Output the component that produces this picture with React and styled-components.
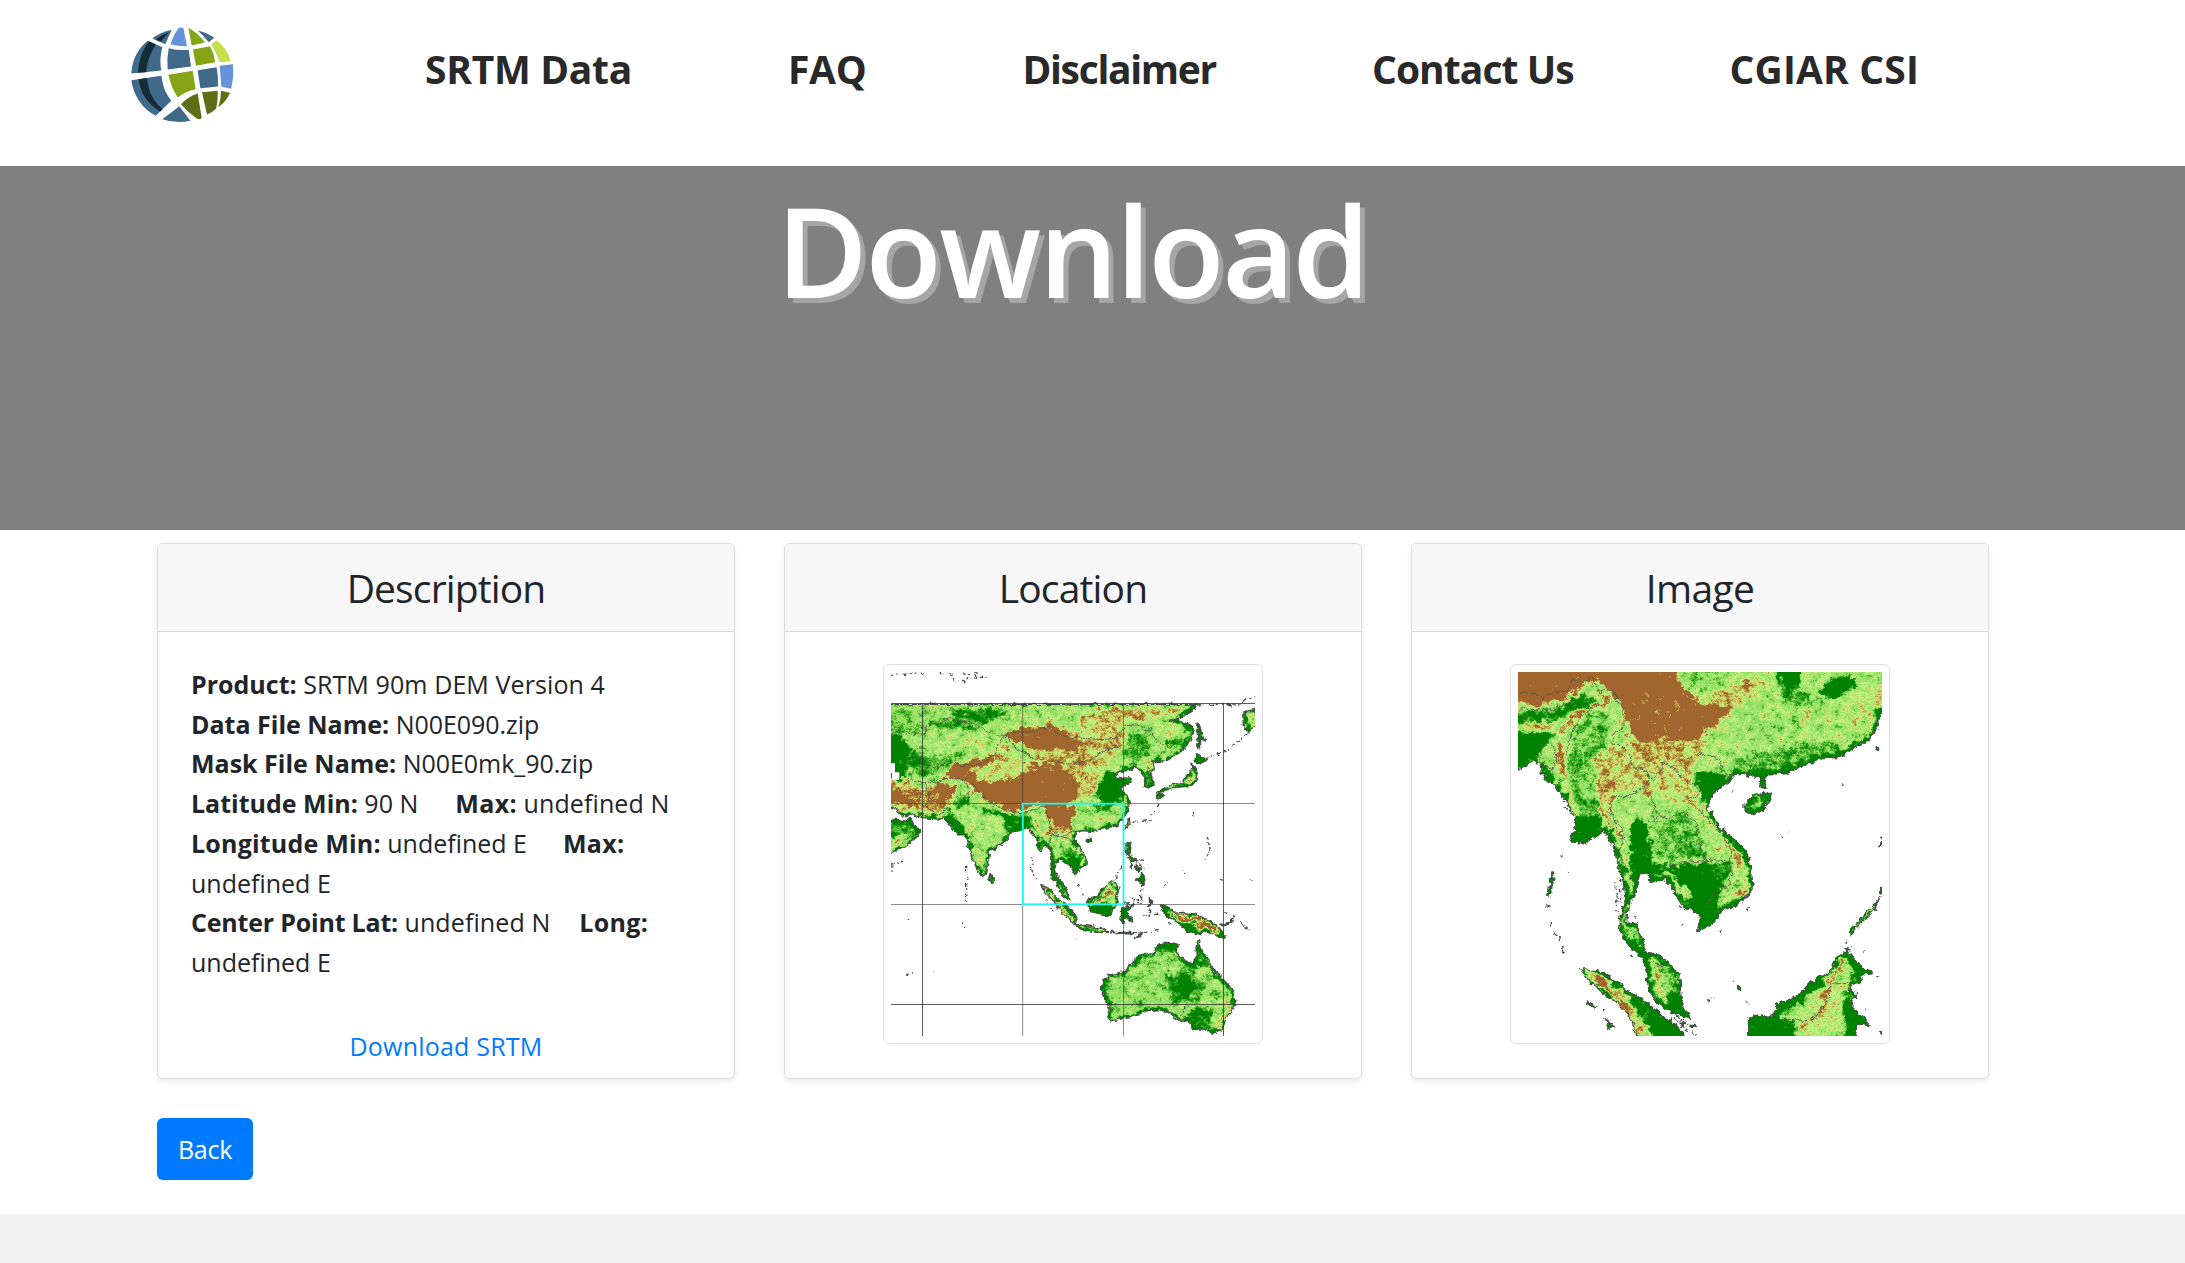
import React from 'react';
import styled, { createGlobalStyle } from 'styled-components';

const GlobalStyle = createGlobalStyle`
  *, *::before, *::after { box-sizing: border-box; }
  body {
    margin: 0;
    background: #fff;
    color: #212529;
    font-family: "Open Sans", "Noto Sans", sans-serif;
    font-size: 25px;
    line-height: 39.7px;
  }
`;

const Page = styled.div`
  display: flex;
  flex-direction: column;
  min-height: 1263px;
  overflow: hidden;
`;

const Header = styled.header`
  display: flex;
  align-items: flex-start;
  height: 166px;
  padding-left: 130px;
  background: #fff;
`;

const Brand = styled.a`
  display: block;
  width: 105px;
  margin: 26px 190px 0 0;
`;

const Nav = styled.nav`
  display: flex;
  gap: 156px;
  padding-top: 39px;
`;

const NavLink = styled.a`
  color: #292929;
  font-size: 39px;
  font-weight: 700;
  line-height: 60px;
  letter-spacing: ${(p) => p.$tracking}px;
  white-space: nowrap;
  text-decoration: none;
`;

const Banner = styled.section`
  height: 364px;
  padding: 8px 41px 0 0;
  background: #808080;
  text-align: center;
`;

const Title = styled.h1`
  margin: 0;
  color: #fff;
  font-size: 125px;
  font-weight: 600;
  line-height: 151px;
  letter-spacing: -2.4px;
  text-shadow: 5px 5px rgba(255, 255, 255, 0.3);
`;

const Main = styled.main`
  width: 1832px;
  margin-left: 157px;
  padding: 13px 0 34px;
`;

const Deck = styled.div`
  display: grid;
  grid-template-columns: repeat(3, 1fr);
  gap: 49px;
`;

const CardBox = styled.article`
  display: flex;
  flex-direction: column;
  height: 536px;
  border: 1px solid #dcdddd;
  border-radius: 6px;
  background: #fff;
  box-shadow: 0 3px 7px rgba(0, 0, 0, 0.08);
  overflow: hidden;
`;

const CardHeader = styled.header`
  height: 88px;
  padding-top: 20px;
  border-bottom: 1px solid #d8d9d9;
  background: #f7f7f7;
  text-align: center;
`;

const CardTitle = styled.h4`
  margin: 0;
  font-size: 39px;
  font-weight: 400;
  line-height: 48px;
  letter-spacing: ${(p) => p.$tracking}px;
`;

const CardBody = styled.div`
  display: flex;
  flex-direction: column;
  align-items: ${(p) => (p.$centered ? 'center' : 'stretch')};
  padding: ${(p) => (p.$centered ? 32 : 33)}px 32px 0;
`;

const Details = styled.p`
  margin: 0 -1px 44px 1px;
`;

const Label = styled.strong`
  margin-left: ${(p) => p.$indent || 0}px;
  font-weight: 700;
  letter-spacing: ${(p) => p.$tracking || 0}px;
`;

const Value = styled.span`
  letter-spacing: ${(p) => p.$tracking || 0}px;
`;

const DownloadLink = styled.a`
  align-self: center;
  color: #007bff;
  letter-spacing: 0.2px;
  text-decoration: none;
`;

const Thumbnail = styled.div`
  width: 380px;
  height: 380px;
  padding: 7px;
  border: 1px solid #dee2e6;
  border-radius: 6px;
  background: #fff;
`;

const MapSvg = styled.svg`
  display: block;
  width: 364px;
  height: 364px;
`;

const BackButton = styled.button`
  display: block;
  width: 96px;
  height: 62px;
  margin-top: 39px;
  padding: 0;
  border: 0;
  border-radius: 6px;
  background: #007bff;
  color: #fff;
  font: inherit;
  line-height: 62px;
  letter-spacing: -0.3px;
`;

const Footer = styled.footer`
  flex: 1;
  background: #f1f1f1;
`;

const GLOBE = [
  ['#406a8a', 'M64,191C66,150 85,115 113,93L157,112C150,140 150,160 154,182Z'],
  ['#152b36', 'M118,95L138,104C120,130 110,160 109,187L84,189C87,150 98,115 118,95Z'],
  ['#406a8a', 'M64,211L154,198C158,225 165,250 184,273L137,318C95,295 70,255 64,211Z'],
  ['#152b36', 'M86,208L111,205C115,245 130,275 158,298L151,305C110,280 90,245 86,208Z'],
  ['#406a8a', 'M127,86Q150,68 185,60L166,103Z'],
  ['#152b36', 'M138,90Q152,75 178,67Q163,80 152,96Z'],
  ['#6692da', 'M206,54L220,54L231,109Q205,110 181,103Q190,75 206,54Z'],
  ['#85a516', 'M235,54Q262,68 285,98L245,107Z'],
  ['#406a8a', 'M263,62Q290,68 313,84L296,97Q283,80 263,62Z'],
  ['#c6dd4c', 'M319,92Q350,112 362,154L329,157Q320,130 304,103Z'],
  ['#406a8a', 'M176,115Q205,123 236,120L243,170L173,179Q170,145 176,115Z'],
  ['#85a516', 'M249,119L300,109Q312,130 316,157L258,168Z'],
  ['#85a516', 'M175,195L248,183L257,238Q228,244 203,263Q183,232 175,195Z'],
  ['#406a8a', 'M263,181L320,172Q325,200 324,230L271,235Z'],
  ['#6692da', 'M329,168L369,163Q372,200 364,237L334,231Z'],
  ['#5d6e14', 'M213,283Q235,260 263,251L275,322Q271,333 259,325Q235,308 213,283Z'],
  ['#5d6e14', 'M276,247L323,243Q324,275 318,297Q306,310 291,314Z'],
  ['#5d6e14', 'M333,243L360,249Q350,275 325,292Q333,270 333,243Z'],
  ['#406a8a', 'M208,289L241,333Q197,342 157,328Z'],
];

function GlobeLogo() {
  return (
    <svg viewBox="60 49 315 290" width="105" height="97" aria-label="CSI">
      {GLOBE.map(([fill, d]) => (
        <path key={d} d={d} fill={fill} />
      ))}
    </svg>
  );
}

// Terrain maps: a grey elevation model is roughened with noise and then
// mapped through a stepped hypsometric palette, low green to high brown.
const gray = (level) => {
  const v = Math.round(Math.min(level, 1) * 255);
  return `rgb(${v},${v},${v})`;
};

function TerrainMap({ id, box, land, islets, blobs, ridges, borders, blur, frequency, rough, shore, children }) {
  const [x, y] = box;
  const region = { x: x - 40, y: y - 40, width: 1172, height: 1172, filterUnits: 'userSpaceOnUse' };
  return (
    <MapSvg viewBox={`${x} ${y} 1092 1092`}>
      <defs>
        <filter id={`${id}-relief`} {...region} colorInterpolationFilters="sRGB">
          <feGaussianBlur in="SourceGraphic" stdDeviation={blur} result="base" />
          <feTurbulence type="fractalNoise" baseFrequency={frequency} numOctaves="4" seed="7" result="n" />
          <feTurbulence type="fractalNoise" baseFrequency="0.13" numOctaves="2" seed="11" result="f" />
          <feDisplacementMap in="base" in2="n" scale="38" xChannelSelector="G" yChannelSelector="B" result="bent" />
          <feColorMatrix in="n" type="matrix" values="1 0 0 0 0 1 0 0 0 0 1 0 0 0 0 0 0 0 0 1" result="grain" />
          <feColorMatrix in="f" type="matrix" values="1 0 0 0 0 1 0 0 0 0 1 0 0 0 0 0 0 0 0 1" result="fine" />
          <feComposite in="bent" in2="grain" operator="arithmetic" k2="1" k3="0.56" k4="-0.28" result="rolling" />
          <feComposite in="rolling" in2="fine" operator="arithmetic" k2="1" k3="0.36" k4="-0.18" result="height" />
          <feComponentTransfer in="height">
            <feFuncR type="discrete" tableValues="0 0 .15 .35 .56 .63 .75 .8 .72 .63 .63" />
            <feFuncG type="discrete" tableValues=".51 .51 .61 .73 .86 .9 .94 .82 .62 .4 .4" />
            <feFuncB type="discrete" tableValues="0 0 .1 .22 .38 .43 .5 .4 .27 .18 .18" />
            <feFuncA type="discrete" tableValues="1 1" />
          </feComponentTransfer>
        </filter>
        <filter id={`${id}-coast`} {...region}>
          <feTurbulence type="fractalNoise" baseFrequency="0.06" numOctaves="3" seed="3" />
          <feDisplacementMap in="SourceGraphic" scale={rough} xChannelSelector="R" yChannelSelector="G" />
        </filter>
        <mask id={`${id}-land`} maskUnits="userSpaceOnUse" x={x} y={y} width="1092" height="1092">
          <g filter={`url(#${id}-coast)`} fill="#fff">
            {land.map((d) => (
              <path key={d} d={d} />
            ))}
          </g>
        </mask>
      </defs>
      <g mask={`url(#${id}-land)`}>
        <g filter={`url(#${id}-relief)`}>
          <rect x={x - 40} y={y - 40} width="1172" height="1172" fill={gray(0.5)} />
          {blobs.map(([level, d]) => (
            <path key={d} d={d} fill={gray(level)} />
          ))}
          {land.map((d) => (
            <path key={d} d={d} fill="none" stroke={gray(0.04)} strokeWidth={shore} />
          ))}
          {ridges.map(([level, width, d]) => (
            <path key={d} d={d} fill="none" stroke={gray(level)} strokeWidth={width} strokeLinecap="round" strokeLinejoin="round" />
          ))}
        </g>
      </g>
      <g filter={`url(#${id}-coast)`} fill="none" stroke="#454b45" strokeLinejoin="round">
        {land.map((d) => (
          <path key={d} d={d} strokeWidth="3.4" />
        ))}
        {borders.map((d) => (
          <path key={d} d={d} strokeWidth="2.6" stroke="#54564a" />
        ))}
        {islets.map((d) => (
          <path key={d} d={d} strokeWidth="4" strokeDasharray="9 7 4 12 14 6" />
        ))}
      </g>
      {children}
    </MapSvg>
  );
}

const LOCATION = {
  land: [
    'M20,166L985,166L972,180L955,192L925,212L900,216L925,214L945,222L968,232L972,248L963,268L948,292L925,315L890,335L872,337L850,343L853,362L838,370L852,395L852,410L835,418L822,412L828,390L815,375L808,362L795,355L785,362L765,366L750,368L738,380L755,388L778,385L785,398L762,408L756,420L772,445L778,462L775,490L760,510L740,530L700,540L670,548L640,545L620,550L612,562L625,590L645,615L652,645L635,660L615,678L607,665L600,650L585,640L570,632L558,642L555,670L568,690L590,720L600,752L580,745L565,720L560,700L543,685L540,650L548,640L540,600L530,590L512,605L503,598L500,570L480,545L470,536L450,545L430,548L415,565L395,585L375,598L358,605L357,640L350,670L335,683L322,665L305,620L290,580L285,555L265,555L250,540L225,512L180,508L150,505L128,498L100,500L80,482L63,475L20,470Z',
    'M20,508L90,512L110,517L118,505L130,525L155,545L140,565L110,590L85,602L63,613L20,620Z',
    'M360,670L372,685L374,700L363,705L356,690Z',
    'M1195,175L1135,185L1118,200L1120,230L1135,248L1150,235L1195,230Z',
    'M985,222L992,240L1003,275L992,268L992,300L983,298L984,265L980,245Z',
    'M978,312L995,322L1010,330L985,342L975,335Z',
    'M966,345L975,352L982,372L978,392L965,408L945,413L915,415L885,428L868,428L885,415L912,405L938,402L950,380L962,372Z',
    'M860,430L878,432L875,445L866,450Z',
    'M653,568L664,568L664,576L656,580L648,574Z',
    'M775,512L778,525L768,544L764,530Z',
    'M768,580L783,582L782,605L775,618L795,632L800,642L780,632L768,615Z',
    'M798,690L812,682L818,672L825,690L818,707L806,696Z',
    'M780,640L790,650L786,660ZM798,648L812,655L808,670L800,662Z',
    'M512,710L535,717L560,745L592,770L617,798L618,824L600,815L578,792L550,755L525,730Z',
    'M652,750L680,745L705,712L728,692L748,715L738,735L745,760L725,785L720,802L690,798L658,790Z',
    'M616,826L650,830L700,840L718,850L680,850L625,838Z',
    'M725,850L800,850L760,856ZM790,868L825,850L812,862Z',
    'M755,775L792,770L768,785L778,800L792,815L775,817L765,800L762,824L753,812Z',
    'M838,742L846,760L838,772Z',
    'M870,770L900,775L910,793L935,790L975,795L1010,810L1040,830L1070,866L1058,870L1030,855L998,848L990,858L950,850L930,825L902,808L885,795Z',
    'M1052,826L1075,820L1090,806L1085,822L1062,831Z',
    'M985,872L998,905L1015,925L1025,960L1050,980L1068,1000L1090,1025L1098,1055L1085,1085L1068,1108L1058,1140L1030,1153L1000,1140L970,1142L955,1115L935,1118L915,1105L900,1092L870,1082L835,1085L800,1100L760,1108L725,1116L710,1105L718,1080L706,1050L694,1020L700,990L720,978L770,965L790,935L820,912L850,915L865,885L895,880L925,885L918,905L945,935L968,942L978,925L978,890Z',
  ],
  islets: [
    'M63,75L130,76L165,72', 'M205,70L245,76L250,96L285,98L300,75L325,85L350,85', 'M280,72L330,72',
    'M985,168L1050,166L1105,168L1130,148L1155,143', 'M1010,328L1070,305L1110,270L1140,248',
    'M840,500L862,480L868,460', 'M785,520L845,514', 'M290,650L290,770', 'M272,820L284,842',
    'M488,625L484,660L498,698', 'M735,690L755,650', 'M815,705L815,750L765,760', 'M970,492L975,515', 'M1012,565L1020,600L1008,632',
    'M820,800L875,795', 'M720,855L800,853L870,845', 'M1090,796L1115,825L1150,850', 'M1060,790L1095,808', 'M770,610L790,620L820,660',
    'M780,625L825,635', 'M880,712L905,690', 'M940,668L945,672', 'M1050,690L1058,694', 'M1142,694L1148,696', 'M100,640L63,645', 'M66,648L66,668',
    'M110,810L114,812', 'M108,978L134,968', 'M188,964L192,966', 'M615,868L619,872', 'M625,705L640,740', 'M770,765L815,760', 'M525,750L550,790', 'M898,822L905,832', 'M840,745L838,800',
    'M925,1115L945,1070L942,1120',
  ],
  blobs: [
    [0.36, 'M40,163H170V260H40Z'], [0.14, 'M220,163H440L400,200L350,225L260,215Z'], [0.25, 'M165,215L230,205L330,230L290,245L190,235Z'],
    [0, 'M40,255L90,255L115,310L105,390L40,395Z'], [0.2, 'M110,290L160,300L190,380L120,380Z'], [0.33, 'M170,325L300,310L250,370L190,370Z'],
    [0.62, 'M280,265L340,265L350,290L300,295Z'],
    [0.68, 'M620,225L700,175L850,170L960,180L890,200L800,215L700,250Z'],
    [0.7, 'M580,250L760,235L760,300L700,360L650,420L590,420L560,330Z'],
    [1, 'M395,255L450,240L560,225L600,258L650,285L600,312L520,305L470,290L430,275Z'],
    [0.74, 'M460,300L620,300L690,350L600,350L500,335Z'],
    [0.8, 'M40,410L110,395L160,420L220,400L260,420L240,470L200,490L130,478L40,470Z'],
    [0.98, 'M50,425L90,435L135,470L60,465Z'], [0.98, 'M190,415L255,410L250,445L215,450Z'],
    [1, 'M240,350L320,325L400,322L440,335L520,345L570,350L605,375L635,410L610,450L580,470L500,468L440,492L380,470L330,440L290,400L225,380Z'],
    [0.64, 'M305,370L370,334L450,334L500,358L440,384L380,400L325,397Z'],
    [0.72, 'M610,370L680,370L690,420L620,460Z'],
    [0, 'M710,370L765,360L790,400L770,440L720,462L680,450L690,410Z'],
    [0.12, 'M670,465L740,455L735,475L680,478Z'],
    [0.27, 'M770,250L850,250L830,320L775,350Z'], [0.7, 'M880,215L915,225L905,260L880,270Z'],
    [0.05, 'M875,285L925,262L945,270L900,300Z'], [0.2, 'M925,215L970,235L950,250Z'],
    [0.22, 'M265,430L305,440L290,470L255,480Z'], [0, 'M225,480L265,510L285,555L250,550Z'],
    [0.1, 'M320,470L400,492L490,510L470,550L420,545L390,500L330,490Z'],
    [0.52, 'M290,530L360,540L350,640L320,650L295,590Z'],
    [1, 'M525,470L600,470L618,500L595,540L555,530L530,500Z'],
    [0.02, 'M500,575L535,580L520,610L500,605Z'],
    [0.25, 'M575,590L610,585L620,620L580,625Z'], [0, 'M560,625L635,625L640,665L605,680L590,645L560,640Z'],
    [0.2, 'M40,515L130,525L140,550L40,570Z'], [0.65, 'M40,575L100,575L70,610L40,615Z'],
    [0, 'M560,740L620,790L620,830L590,800Z'], [0, 'M650,765L740,770L720,805L660,800Z'],
    [0, 'M935,815L990,830L995,860L945,850Z'],
    [0.43, 'M700,980L900,920L990,960L1080,1040L1000,1050L800,1090L710,1100Z'],
    [0.25, 'M890,990L950,950L1000,1000L990,1060L900,1060Z'],
    [0, 'M912,1015L945,985L972,1015L960,1052L925,1050Z'], [0.12, 'M945,1080L1035,1075L1020,1130L970,1130Z'],
    [0.12, 'M865,885L925,890L920,915L870,910Z'], [0.08, 'M930,930L990,900L1010,950L960,960Z'], [0.15, 'M780,935L830,915L800,960Z'],
  ],
  ridges: [
    [0.8, 10, 'M495,500L505,545L545,560'], [0.72, 20, 'M545,540L600,555'], [0.72, 10, 'M612,590L640,620L640,650'],
    [0.9, 12, 'M515,712L560,765L605,815'], [0.82, 12, 'M720,700L715,735L680,760'], [0.65, 9, 'M625,833L700,845'],
    [1, 14, 'M910,797L980,812L1040,850'], [0.75, 12, 'M1080,1045L1078,1085L1040,1135'], [0.7, 8, 'M965,360L965,395L890,420'],
    [0.8, 12, 'M835,345L850,355'], [0.72, 14, 'M70,395L140,410'], [0.82, 12, 'M640,210L720,188L820,200'], [0.8, 10, 'M740,178L900,178'], [0.74, 10, 'M370,310L430,290'],
    [0.72, 9, 'M318,635L345,640'], [0.7, 9, 'M770,515L770,540'], [0.72, 8, 'M1135,190L1145,230'],
    [0.5, 6, 'M430,335L500,340'], [0.5, 18, 'M20,172L960,172'], [0.75, 12, 'M20,430L20,465'], [0.7, 9, 'M70,480L140,490L220,495'], [0.45, 8, 'M900,290L945,255'],
  ],
  borders: [
    'M63,250L100,248L125,256L165,255L170,230L215,222L225,210L290,218L340,240L385,262L410,255',
    'M410,255L385,285L370,320L335,345L270,350L240,335L200,355L150,335L120,318',
    'M410,250L480,248L540,235L575,262L640,268L700,272L735,268L765,230L800,228L845,250L870,280L890,300L870,320L845,340',
    'M410,255L440,300L500,330L600,345L660,335L700,305L755,290',
    'M110,390L165,400L200,400L250,385L290,395L325,420L350,455L410,485L460,492L525,470L545,545L580,560L610,545',
    'M165,400L175,440L170,470L200,500', 'M200,500L240,470L275,455L300,425L290,400', 'M530,600L548,555L600,570L620,600',
    'M665,760L700,745L720,725',
  ],
};

const REGION = {
  land: [
    'M10,20H1200V190L1138,192L1130,240L1095,280L1050,305L1020,325L960,330L915,350L870,368L800,380L795,400L798,418L783,415L775,388L740,375L700,380L685,400L650,425L630,450L625,480L650,520L680,555L715,580L740,610L752,650L758,695L750,735L720,760L670,785L650,810L610,840L593,848L598,795L570,780L545,765L525,735L515,715L490,690L450,700L447,672L418,675L412,710L405,735L390,760L383,790L380,822L408,825L415,850L430,880L440,912L480,920L510,945L540,980L542,1020L545,1060L572,1108L545,1105L500,1080L470,1060L445,1020L440,970L430,935L400,905L375,875L358,850L362,800L375,760L370,700L350,630L335,580L310,545L295,555L270,575L250,585L208,575L225,540L222,500L200,460L180,430L150,400L130,380L120,345L100,335L80,350L54,365L10,370Z',
    'M735,460L765,435L815,432L810,450L795,475L765,495L735,485Z',
    'M245,960L310,972L350,995L390,1030L440,1060L480,1095L520,1120L550,1150L560,1210L420,1210L395,1110L350,1060L310,1030L262,990Z',
    'M1040,905L1060,930L1090,955L1118,970L1080,980L1085,1000L1052,1012L1065,1040L1055,1072L1110,1130L1072,1125L1060,1210L745,1210L742,1120L760,1095L800,1105L828,1095L830,1065L890,1045L930,1000L985,970L1010,930Z',
    'M1140,745L1122,785L1090,815L1050,855L1048,848L1085,805L1125,762Z',
    'M160,665L162,685L150,745L144,740L152,690Z', 'M138,768L146,768L144,776L138,776Z', 'M176,855L182,862L178,872Z', 'M188,895L194,912L188,912Z',
    'M315,1108L330,1118L342,1140L328,1135Z', 'M262,1058L288,1072L284,1076L265,1066Z', 'M710,1014L722,1012L722,1026L712,1026Z',
    'M1142,565H1160V590H1142Z', 'M1142,712H1160V735H1142Z', 'M1142,1145H1160V1160H1142Z', 'M1128,296H1136V304H1128Z', 'M1034,898L1048,896L1044,904Z',
    'M540,1120L550,1116L560,1128L548,1132Z', 'M566,1126L586,1126L580,1136Z',
  ],
  islets: [
    'M345,700L352,735L348,790', 'M362,690L362,760', 'M185,440L192,475L200,480', 'M625,1055L650,1040', 'M738,1050L748,1070',
    'M404,800L415,830', 'M390,920L412,930', 'M540,770L565,790', 'M150,825L156,832', 'M182,618L188,622', 'M160,850L180,870', 'M205,670L210,672', 'M1040,875L1034,890',
    'M1128,985L1145,975', 'M1092,1080L1096,1082', 'M1090,905L1094,908', 'M742,776L746,780', 'M698,992L712,998', 'M1026,404L1030,407', 'M865,546L869,549', 'M845,561L849,563', 'M700,425L704,427',
    'M1130,755L1140,770', 'M520,1105L560,1140L590,1160', 'M310,1080L314,1086', 'M543,822L547,826', 'M658,842L662,848', 'M1048,1020L1075,1030L1060,1050',
  ],
  blobs: [
    [0.52, 'M30,40H1180V420H30Z'], [0.42, 'M520,40H700L680,100L600,140L555,120Z'],
    [0.7, 'M640,130L760,80L820,75L760,130L700,200L650,240L600,220Z'],
    [0.47, 'M700,180L880,120L1000,170L900,260L750,290L690,250Z'],
    [0, 'M830,50L905,50L900,110L870,130L845,105Z'], [0, 'M950,140L1000,85L1060,75L1065,110L1000,150Z'],
    [0.25, 'M830,110L900,130L950,150L930,170L850,150Z'],
    [0.3, 'M700,335L800,310L900,280L1020,290L1020,340L860,385L700,390Z'], [0.58, 'M1040,140L1146,110L1140,190L1040,250Z'],
    [1, 'M30,30L520,30L545,110L580,150L630,160L690,180L650,225L600,260L550,310L480,290L430,290L385,255L372,190L335,130L300,100L250,100L200,150L120,170L30,160Z'],
    [0.68, 'M400,280L620,270L600,340L540,380L450,380L400,340Z'],
    [0.8, 'M385,270L440,290L560,290L540,330L440,330Z'],
    [0.12, 'M30,190L160,182L235,142L285,140L270,175L190,200L150,222L30,215Z'],
    [0, 'M30,248L160,255L125,300L110,350L30,380Z'], [0.05, 'M110,320L150,370L200,450L220,490L180,460L120,380Z'],
    [0.3, 'M230,240L275,185L330,190L315,290L275,340L290,440L310,520L230,530L212,430L205,320Z'],
    [0.4, 'M240,250L290,210L290,260L240,320Z'], [0.42, 'M235,380L280,370L280,450L240,440Z'],
    [0, 'M228,505L305,505L300,565L250,590L205,580Z'],
    [0.7, 'M285,320L370,290L445,340L440,410L350,430L320,490L295,450Z'],
    [0.5, 'M340,430L460,430L450,520L390,530L350,500Z'],
    [0.02, 'M590,365L665,370L680,390L645,430L620,475L600,440Z'], [0.64, 'M450,380L560,370L590,430L560,470L480,450Z'],
    [0.32, 'M465,530L550,488L600,540L622,635L475,635Z'],
    [0.24, 'M530,590L610,590L615,620L540,612Z'],
    [0, 'M396,515L435,515L462,640L520,655L440,690L385,680Z'],
    [0.02, 'M500,650L640,640L680,670L660,730L650,790L590,850L570,770L540,700Z'],
    [0.18, 'M630,640L690,640L690,690L640,690Z'],
    [0.5, 'M620,500L680,560L720,640L700,720L740,740L750,640L700,570Z'],
    [0, 'M330,550L360,580L365,620L340,610Z'],
    [0, 'M370,850L415,850L450,930L430,940Z'], [0.4, 'M440,940L520,960L540,1030L500,1060L450,1010Z'],
    [0, 'M500,1040L540,1020L580,1110L520,1100Z'],
    [0, 'M400,1050L480,1085L560,1140L560,1180L470,1180Z'], [0.1, 'M350,990L420,1040L470,1090L430,1120Z'],
    [0.03, 'M740,1085L830,1100L890,1130L880,1180L740,1180Z'], [0.05, 'M830,1060L930,995L980,965L960,1010L890,1070L840,1090Z'],
    [0.05, 'M1040,900L1120,960L1120,990L1060,990Z'], [0.05, 'M1030,1080L1070,1010L1120,1140L1040,1180Z'], [0.58, 'M890,1090L980,1010L1030,1010L1020,1130L920,1170L890,1140Z'],
    [0.42, 'M745,455L810,440L800,475L750,482Z'],
  ],
  ridges: [
    [0.85, 13, 'M75,230L150,232'], [0.88, 16, 'M180,285L180,330L192,390'], [0.86, 14, 'M185,250L225,200L300,165L330,150'], [0.64, 14, 'M195,400L228,500'],
    [0.8, 12, 'M290,330L300,470L330,530L370,570'], [0.62, 12, 'M350,580L380,620L395,720'], [0.8, 12, 'M520,320L580,380'],
    [0.74, 12, 'M540,430L600,480L650,540L690,600L725,650'], [0.8, 16, 'M640,600L660,608'], [0.82, 16, 'M710,745L740,715'], [0.82, 16, 'M700,600L715,630'],
    [0.66, 14, 'M530,715L570,740'], [0.05, 9, 'M640,500L680,548L725,590L752,650L757,700'], [0.5, 12, 'M375,780L368,840L398,850L420,890'],
    [0.8, 12, 'M468,960L475,1010L495,1060'], [0.66, 26, 'M265,970L330,1015L380,1080L430,1150'], [0.92, 18, 'M290,985L330,1030'], [0.92, 20, 'M360,1060L385,1085'], [0.82, 12, 'M400,1120L420,1150'],
    [0.82, 16, 'M1022,930L1015,965L990,1000L975,1060L950,1110'], [0.7, 16, 'M900,1140L1000,1080'], [0.66, 30, 'M340,300L360,380'], [0.82, 22, 'M320,370L330,420'],
    [0.8, 14, 'M440,400L450,440'], [0.7, 14, 'M780,210L810,180'], [0.75, 18, 'M910,220L935,190'], [0.03, 12, 'M700,380L800,370L910,345L1020,320L1095,275L1135,225'],
    [0.58, 8, 'M465,640L615,632'], [0.5, 8, 'M1055,850L1125,775'],
    [0.62, 5, 'M380,230L390,290M480,180L500,240L490,290M520,150L535,200M440,140L520,170'],
  ],
  borders: [
    'M60,130L110,135L130,150L160,130L205,125L215,95L255,100L270,85L290,110L300,135L325,120L345,135L355,160L372,180L372,230L345,250L335,285L365,290L385,310L400,350L440,370L450,395L430,410',
    'M54,180L110,182L160,182L240,145', 'M160,290L170,330L160,360L120,350L120,290L160,285',
    'M300,165L250,195L210,260L200,320',
    'M435,375L460,390L480,370L490,340L520,355L560,400L590,410L595,440L560,450L600,485L640,530L680,570L695,610L690,640L640,635L615,630L590,570L590,520L550,490L510,510L480,500L455,520L465,460L430,415L390,440L345,440L330,490L360,530L370,580L355,610L395,690L400,720',
    'M560,330L600,315L660,330L665,360L690,390', 'M510,650L560,640L620,635', 'M695,640L690,710L650,725L620,770',
    'M450,930L470,950L500,950', 'M845,1110L930,1115L960,1090L985,1040L990,1005L1050,1003',
  ],
};

function LocationMap() {
  return (
    <TerrainMap id="loc" box={[63, 69]} blur={4} frequency="0.04" rough={16} shore={14} {...LOCATION}>
      <g fill="#fff">
        <path d="M63,343H75V370H88V392H66V372H63Z" />
      </g>
      <g fill="none" stroke="#303030" strokeWidth="2.8" strokeOpacity="0.85">
        <path d="M63,163.500H1155M63,1066.500H1155M157.500,163V1161M1060.500,163V1161" />
        <path strokeOpacity="0.6" d="M63,463.500H1155M63,766.500H1155M458,163V1161M760.500,163V1161" />
      </g>
      <rect x="458.500" y="464" width="302" height="302" fill="none" stroke="#1ff5ee" strokeWidth="5.500" />
    </TerrainMap>
  );
}

function RegionMap() {
  return <TerrainMap id="reg" box={[54, 69]} blur={5} frequency="0.04" rough={22} shore={24} {...REGION} />;
}

const NAV = [
  ['SRTM Data', -0.3],
  ['FAQ', -0.3],
  ['Disclaimer', -1.3],
  ['Contact Us', -0.95],
  ['CGIAR CSI', 0.15],
];

function Card({ title, tracking, centered, children }) {
  return (
    <CardBox>
      <CardHeader>
        <CardTitle $tracking={tracking}>{title}</CardTitle>
      </CardHeader>
      <CardBody $centered={centered}>{children}</CardBody>
    </CardBox>
  );
}

export default function App() {
  return (
    <>
      <GlobalStyle />
      <Page>
        <Header>
          <Brand>
            <GlobeLogo />
          </Brand>
          <Nav>
            {NAV.map(([label, tracking]) => (
              <NavLink key={label} $tracking={tracking}>
                {label}
              </NavLink>
            ))}
          </Nav>
        </Header>
        <Banner>
          <Title>Download</Title>
        </Banner>
        <Main>
          <Deck>
            <Card title="Description" tracking={-0.87}>
              <Details>
                <Label>Product:</Label> <Value $tracking={0.1}>SRTM 90m DEM Version 4</Value>
                <br />
                <Label>Data File Name:</Label> <Value $tracking={-0.05}>N00E090.zip</Value>
                <br />
                <Label>Mask File Name:</Label> <Value $tracking={-0.05}>N00E0mk_90.zip</Value>
                <br />
                <Label>Latitude Min:</Label> <Value>90 N</Value>
                <Label $indent={37} $tracking={0.4}>Max:</Label> <Value $tracking={0.1}>undefined N</Value>
                <br />
                <Label $tracking={0.2}>Longitude Min:</Label> <Value>undefined E</Value>
                <Label $indent={36} $tracking={0.3}>Max:</Label> <Value>undefined E</Value>
                <br />
                <Label $tracking={-0.2}>Center Point Lat:</Label> <Value $tracking={0.1}>undefined N</Value>
                <Label $indent={29} $tracking={0.3}>Long:</Label> <Value>undefined E</Value>
              </Details>
              <DownloadLink>Download SRTM</DownloadLink>
            </Card>
            <Card title="Location" tracking={-0.84} centered>
              <Thumbnail>
                <LocationMap />
              </Thumbnail>
            </Card>
            <Card title="Image" tracking={-0.6} centered>
              <Thumbnail>
                <RegionMap />
              </Thumbnail>
            </Card>
          </Deck>
          <BackButton>Back</BackButton>
        </Main>
        <Footer />
      </Page>
    </>
  );
}
